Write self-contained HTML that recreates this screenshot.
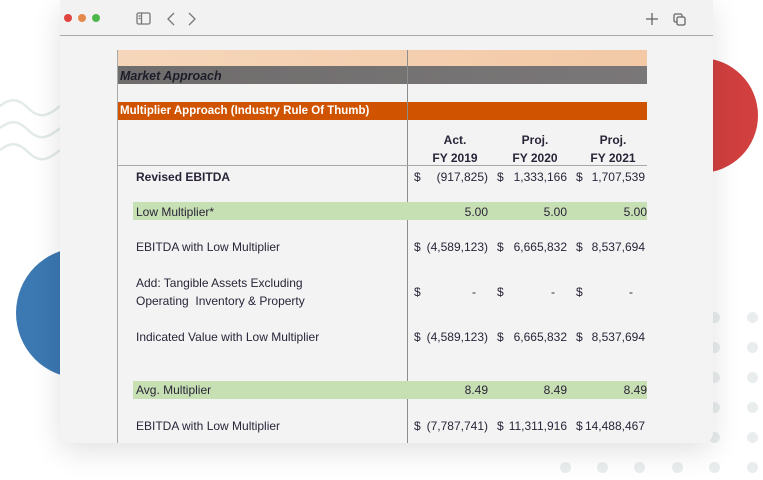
<!DOCTYPE html>
<html><head><meta charset="utf-8">
<style>
*{margin:0;padding:0;box-sizing:border-box}
body{width:763px;height:480px;background:#fff;position:relative;overflow:hidden;font-family:"Liberation Sans",sans-serif}
.abs{position:absolute}
.dot{position:absolute;width:11px;height:11px;border-radius:50%;background:#e9eded}
.win{position:absolute;left:60px;top:0;width:653px;height:443px;background:#f3f3f3;border-radius:0 0 10px 10px;box-shadow:0 8px 30px rgba(0,0,0,.12);overflow:hidden}
.bar{position:absolute;left:0;top:0;width:653px;height:36px;background:#f2f2f2;border-bottom:1.5px solid #a8a8a8}
.t{position:absolute;font-size:12px;color:#2a2438;white-space:nowrap;letter-spacing:0px}
.r{text-align:right}
.b{font-weight:bold}
</style></head><body>
<div class="abs" style="left:643px;top:58px;width:115px;height:115px;border-radius:50%;background:#d13f3f"></div>
<div class="abs" style="left:16px;top:248px;width:128px;height:130px;border-radius:50%;background:#3c78b2"></div>
<svg class="abs" style="left:0;top:98px" width="62" height="70"><g fill="none" stroke="#e3ebea" stroke-width="2.5">
<path d="M0 8 C10 0 18 0 28 10 S46 20 60 8"/><path d="M0 30 C10 22 18 22 28 32 S46 42 60 30"/><path d="M0 52 C10 44 18 44 28 54 S46 64 60 52"/></g></svg>
<div id="dots"></div>
<div class="win">
 <div class="bar">
  <div class="abs" style="left:4px;top:14px;width:8px;height:8px;border-radius:50%;background:#e0443e"></div>
  <div class="abs" style="left:18px;top:14px;width:8px;height:8px;border-radius:50%;background:#e5894a"></div>
  <div class="abs" style="left:32px;top:14px;width:8px;height:8px;border-radius:50%;background:#4cb74a"></div>
  <svg class="abs" style="left:76px;top:11px" width="110" height="16"><g fill="none" stroke="#777" stroke-width="1.3">
   <rect x="1" y="2" width="13" height="11" rx="1.5"/><line x1="5.5" y1="2" x2="5.5" y2="13"/><line x1="2.5" y1="5" x2="4.5" y2="5"/><line x1="2.5" y1="7.5" x2="4.5" y2="7.5"/>
   <path d="M38 2 L32 8 L38 14"/><path d="M53 2 L59 8 L53 14"/></g></svg>
  <svg class="abs" style="left:584px;top:11px" width="50" height="16"><g fill="none" stroke="#666" stroke-width="1.3">
   <line x1="2" y1="8" x2="14" y2="8"/><line x1="8" y1="2" x2="8" y2="14"/>
   <rect x="30" y="3" width="8" height="8" rx="1.5"/><rect x="33" y="6" width="8" height="8" rx="1.5" fill="#f2f2f2"/></g></svg>
 </div>
 <div class="abs" style="left:57px;top:50px;width:530px;height:16px;background:linear-gradient(90deg,#f6d6ba,#f3c9a6)"></div>
 <div class="abs" style="left:57px;top:66px;width:530px;height:18px;background:linear-gradient(90deg,#6f6c6c,#7a7778)"></div>
 <div class="t b" style="left:60px;top:69px;font-style:italic;font-size:12.5px;color:#1d1d2a">Market Approach</div>
 <div class="abs" style="left:57px;top:102px;width:530px;height:18px;background:#d05400"></div>
 <div class="t b" style="left:60px;top:105px;color:#fff;font-size:11.5px">Multiplier Approach (Industry Rule Of Thumb)</div>
 <div class="abs" style="left:57px;top:50px;width:1px;height:393px;background:#a9a9a9"></div>
 <div class="abs" style="left:347px;top:50px;width:1px;height:393px;background:#8d8d8d"></div>
 <div class="abs" style="left:57px;top:165px;width:530px;height:1px;background:#a8a8a8"></div>
 <div class="t b" style="left:360px;top:133px;width:70px;text-align:center">Act.</div>
 <div class="t b" style="left:360px;top:151px;width:70px;text-align:center">FY 2019</div>
 <div class="t b" style="left:440px;top:133px;width:70px;text-align:center">Proj.</div>
 <div class="t b" style="left:440px;top:151px;width:70px;text-align:center">FY 2020</div>
 <div class="t b" style="left:518px;top:133px;width:70px;text-align:center">Proj.</div>
 <div class="t b" style="left:518px;top:151px;width:70px;text-align:center">FY 2021</div>
 <div class="abs" style="left:73px;top:202px;width:514px;height:18px;background:#c6e0b3"></div>
 <div class="abs" style="left:73px;top:381px;width:514px;height:18px;background:#c6e0b3"></div>
 <div class="t b" style="left:76px;top:170px">Revised EBITDA</div>
 <div class="t" style="left:76px;top:205px">Low Multiplier*</div>
 <div class="t" style="left:76px;top:240px">EBITDA with Low Multiplier</div>
 <div class="t" style="left:76px;top:276px">Add: Tangible Assets Excluding</div>
 <div class="t" style="left:76px;top:294px">Operating&nbsp; Inventory &amp; Property</div>
 <div class="t" style="left:76px;top:330px">Indicated Value with Low Multiplier</div>
 <div class="t" style="left:76px;top:383px">Avg. Multiplier</div>
 <div class="t" style="left:76px;top:419px">EBITDA with Low Multiplier</div>
 <div id="vals"></div>
</div>
<script>
var d='';
var xs=[565,602,639,677,714,752],ys=[317,347,377,407,437,467];
for(var i=0;i<6;i++)for(var j=0;j<6;j++)d+='<div class="dot" style="left:'+(xs[j]-5)+'px;top:'+(ys[i]-5)+'px"></div>';
document.getElementById('dots').innerHTML=d;
var rows=[[170,['(917,825)','1,333,166','1,707,539'],1],[205,['5.00','5.00','5.00'],0],[240,['(4,589,123)','6,665,832','8,537,694'],1],[285,['-','-','-'],1],[330,['(4,589,123)','6,665,832','8,537,694'],1],[383,['8.49','8.49','8.49'],0],[419,['(7,787,741)','$11,311,916','$14,488,467'],1]];
var dx=[354,437,516],rx=[428,507,585];
var h='';
rows.forEach(function(r){for(var k=0;k<3;k++){
 var v=r[1][k],dol=r[2];
 if(v[0]=='$'){h+='<div class="t" style="left:'+dx[k]+'px;top:'+r[0]+'px">$</div>';v=v.slice(1);}
 else if(dol)h+='<div class="t" style="left:'+dx[k]+'px;top:'+r[0]+'px">$</div>';
 var right=(v=='-')?rx[k]-12:rx[k];
 if(!dol)right=rx[k]+(k==2?2:0);
 h+='<div class="t r" style="left:'+(right-90)+'px;width:90px;top:'+r[0]+'px">'+v+'</div>';
}});
document.getElementById('vals').innerHTML=h;
</script>
</body></html>
